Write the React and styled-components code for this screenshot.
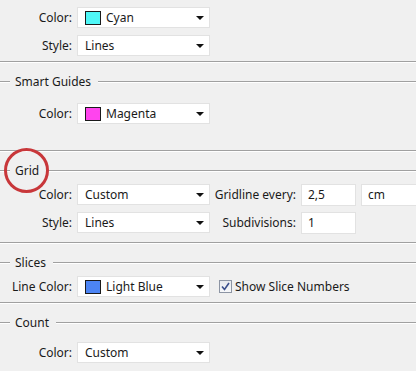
import React from "react";
import styled, { createGlobalStyle } from "styled-components";

const Global = createGlobalStyle`
  html, body { margin: 0; padding: 0; background: #f0f0f0; overflow: hidden; }
  body { font-family: "Noto Sans", "Open Sans", Arial, sans-serif; font-size: 12px; color: #1a1a1a; }
`;

const Page = styled.div`
  width: 416px;
  height: 371px;
  background: #f0f0f0;
  overflow: hidden;
`;

const Group = styled.div`
  display: flex;
  flex-direction: column;
  padding-top: ${(p) => p.$top}px;
  padding-bottom: ${(p) => p.$bottom}px;
`;

const Rows = styled.div`
  display: flex;
  flex-direction: column;
  gap: 7px;
  margin-top: ${(p) => p.$gap}px;
`;

const Rule = styled.div`
  height: 0;
  border-top: 1px solid #a0a0a0;
  border-bottom: 1px solid #ffffff;
  flex: ${(p) => (p.$grow ? 1 : "none")};
  width: ${(p) => (p.$grow ? "auto" : "10px")};
`;

const LegendBar = styled.div`
  position: relative;
  display: flex;
  align-items: center;
  height: 16px;
  margin-top: 11px;
`;

const LegendText = styled.span`
  padding: 0 7px 0 5px;
  line-height: 16px;
  margin-top: -1px;
`;

const Circle = styled.span`
  position: absolute;
  left: 4px;
  top: -15px;
  width: 39px;
  height: 39px;
  border: 3px solid #c8373a;
  border-radius: 50%;
  pointer-events: none;
`;

const Row = styled.div`
  display: flex;
  align-items: center;
  height: 21px;
`;

const Label = styled.span`
  width: ${(p) => p.$w}px;
  text-align: right;
  white-space: nowrap;
  flex: none;
  margin-right: 5px;
`;

const Select = styled.div`
  box-sizing: border-box;
  width: ${(p) => p.$w || 133}px;
  height: 21px;
  flex: none;
  display: flex;
  align-items: center;
  background: #ffffff;
  border: 1px solid #e2e2e2;
  padding: 0 4px 0 7px;
  gap: 5px;
`;

const Value = styled.span`
  flex: 1;
  white-space: nowrap;
`;

const Swatch = styled.span`
  box-sizing: border-box;
  width: 16px;
  height: 14px;
  border: 1px solid #1a1a1a;
  background: ${(p) => p.$color};
  flex: none;
`;

const Arrow = styled.span`
  width: 0;
  height: 0;
  border-left: 4px solid transparent;
  border-right: 4px solid transparent;
  border-top: 4px solid #111;
  flex: none;
  margin-right: 1px;
`;

const Input = styled.div`
  box-sizing: border-box;
  width: ${(p) => p.$w}px;
  height: 22px;
  flex: none;
  background: #ffffff;
  border: 1px solid #e2e2e2;
  padding: 0 6px;
  display: flex;
  align-items: center;
  margin-right: 5px;
  white-space: nowrap;
`;

const CheckWrap = styled.label`
  display: flex;
  align-items: center;
  gap: 3px;
  margin-left: 9px;
  white-space: nowrap;
`;

const Box = styled.span`
  box-sizing: border-box;
  width: 13px;
  height: 13px;
  border: 1px solid #8d95a4;
  background: linear-gradient(#e6e9ee, #f7f8fa);
  display: flex;
  align-items: center;
  justify-content: center;
`;

const Legend = ({ children, circled }) => (
  <LegendBar>
    <Rule />
    <LegendText>{children}</LegendText>
    <Rule $grow />
    {circled && <Circle />}
  </LegendBar>
);

const Dropdown = ({ w, color, children }) => (
  <Select $w={w}>
    {color && <Swatch $color={color} />}
    <Value>{children}</Value>
    <Arrow />
  </Select>
);

export default function App() {
  return (
    <Page>
      <Global />
      <Group $top={7} $bottom={5}>
        <Rows $gap={0}>
          <Row>
            <Label $w={72}>Color:</Label>
            <Dropdown color="#4ff7f7">Cyan</Dropdown>
          </Row>
          <Row>
            <Label $w={72}>Style:</Label>
            <Dropdown>Lines</Dropdown>
          </Row>
        </Rows>
      </Group>
      <Rule $grow />
      <Group $top={0} $bottom={26}>
        <Legend>Smart Guides</Legend>
        <Rows $gap={13}>
          <Row>
            <Label $w={72}>Color:</Label>
            <Dropdown color="#ff44ee">Magenta</Dropdown>
          </Row>
        </Rows>
      </Group>
      <Rule $grow />
      <Group $top={0} $bottom={9}>
        <Legend circled>Grid</Legend>
        <Rows $gap={5}>
          <Row>
            <Label $w={72}>Color:</Label>
            <Dropdown>Custom</Dropdown>
            <Label $w={86}>Gridline every:</Label>
            <Input $w={55}>2,5</Input>
            <Input $w={70}>cm</Input>
          </Row>
          <Row>
            <Label $w={72}>Style:</Label>
            <Dropdown>Lines</Dropdown>
            <Label $w={86}>Subdivisions:</Label>
            <Input $w={55}>1</Input>
          </Row>
        </Rows>
      </Group>
      <Rule $grow />
      <Group $top={0} $bottom={5}>
        <Legend>Slices</Legend>
        <Rows $gap={5}>
          <Row>
            <Label $w={72}>Line Color:</Label>
            <Dropdown color="#4c84f4">Light Blue</Dropdown>
            <CheckWrap>
              <Box>
                <svg width="9" height="9" viewBox="0 0 9 9">
                  <path d="M1 4.5 L3.5 7.5 L8 1" fill="none" stroke="#3a4f8c" strokeWidth="1.6" />
                </svg>
              </Box>
              Show Slice Numbers
            </CheckWrap>
          </Row>
        </Rows>
      </Group>
      <Rule $grow />
      <Group $top={0} $bottom={0}>
        <Legend>Count</Legend>
        <Rows $gap={11}>
          <Row>
            <Label $w={72}>Color:</Label>
            <Dropdown>Custom</Dropdown>
          </Row>
        </Rows>
      </Group>
    </Page>
  );
}
